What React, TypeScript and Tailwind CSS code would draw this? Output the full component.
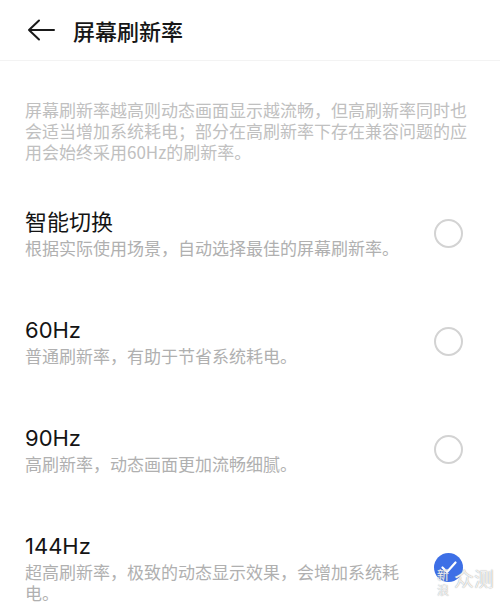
import { useState } from "react";

type Option = {
  id: string;
  title: string;
  desc: string;
};

const options: Option[] = [
  { id: "auto", title: "智能切换", desc: "根据实际使用场景，自动选择最佳的屏幕刷新率。" },
  { id: "60", title: "60Hz", desc: "普通刷新率，有助于节省系统耗电。" },
  { id: "90", title: "90Hz", desc: "高刷新率，动态画面更加流畅细腻。" },
  { id: "144", title: "144Hz", desc: "超高刷新率，极致的动态显示效果，会增加系统耗电。" },
];

function Radio({ checked }: { checked: boolean }) {
  if (checked) {
    return (
      <div className="w-[29px] h-[29px] rounded-full bg-[#3d6fe6] flex items-center justify-center">
        <svg width="16" height="13" viewBox="0 0 16 13" fill="none">
          <path d="M1.5 6.5L6 11L14.5 1.5" stroke="white" strokeWidth="2.2" strokeLinecap="round" strokeLinejoin="round" />
        </svg>
      </div>
    );
  }
  return <div className="w-[29px] h-[29px] rounded-full border-2 border-[#d3d3d3]" />;
}

export default function App() {
  const [selected, setSelected] = useState("144");

  return (
    <div
      className="relative w-full h-[602px] overflow-hidden bg-white"
      style={{ fontFamily: '"Noto Sans CJK SC", "Noto Sans", sans-serif' }}
    >
      {/* header */}
      <div className="h-[61px] flex items-center border-b border-[#f3f3f3]">
        <button className="ml-[27px] w-[28px] h-[22px] flex items-center">
          <svg width="28" height="22" viewBox="0 0 28 22" fill="none">
            <path d="M27 11H2M12 1.5L2 11l10 9.5" stroke="#1a1a1a" strokeWidth="2" strokeLinecap="round" strokeLinejoin="round" />
          </svg>
        </button>
        <h1 className="ml-[18px] text-[22px] leading-[28px] font-medium text-[#161616]">屏幕刷新率</h1>
      </div>

      <p className="pt-[38px] pl-[25px] pr-[30px] text-[17px] leading-[21px] text-[#c0c0c0]">
        屏幕刷新率越高则动态画面显示越流畅，但高刷新率同时也会适当增加系统耗电；部分在高刷新率下存在兼容问题的应用会始终采用60Hz的刷新率。
      </p>

      <div className="mt-[46px] flex flex-col gap-[58px]">
        {options.map((o) => (
          <div
            key={o.id}
            onClick={() => setSelected(o.id)}
            className="flex items-center justify-between pl-[25px] pr-[37px] cursor-pointer"
          >
            <div className="w-[385px]">
              <div className="text-[22px] leading-[28px] text-[#141414] font-['Inter','Noto_Sans_CJK_SC',sans-serif]">
                {o.title}
              </div>
              <div className="mt-[1px] text-[17px] leading-[21px] text-[#b0b0b0]">{o.desc}</div>
            </div>
            <Radio checked={selected === o.id} />
          </div>
        ))}
      </div>

      {/* watermark */}
      <div className="absolute left-[437px] top-[567px] flex items-start gap-[4px] text-white/85 [text-shadow:0_0_1px_#8a8a8a]">
        <span className="text-[12px] leading-[15px] w-[13px] break-all">新浪</span>
        <span className="text-[20px] leading-[24px]">众测</span>
      </div>
    </div>
  );
}
